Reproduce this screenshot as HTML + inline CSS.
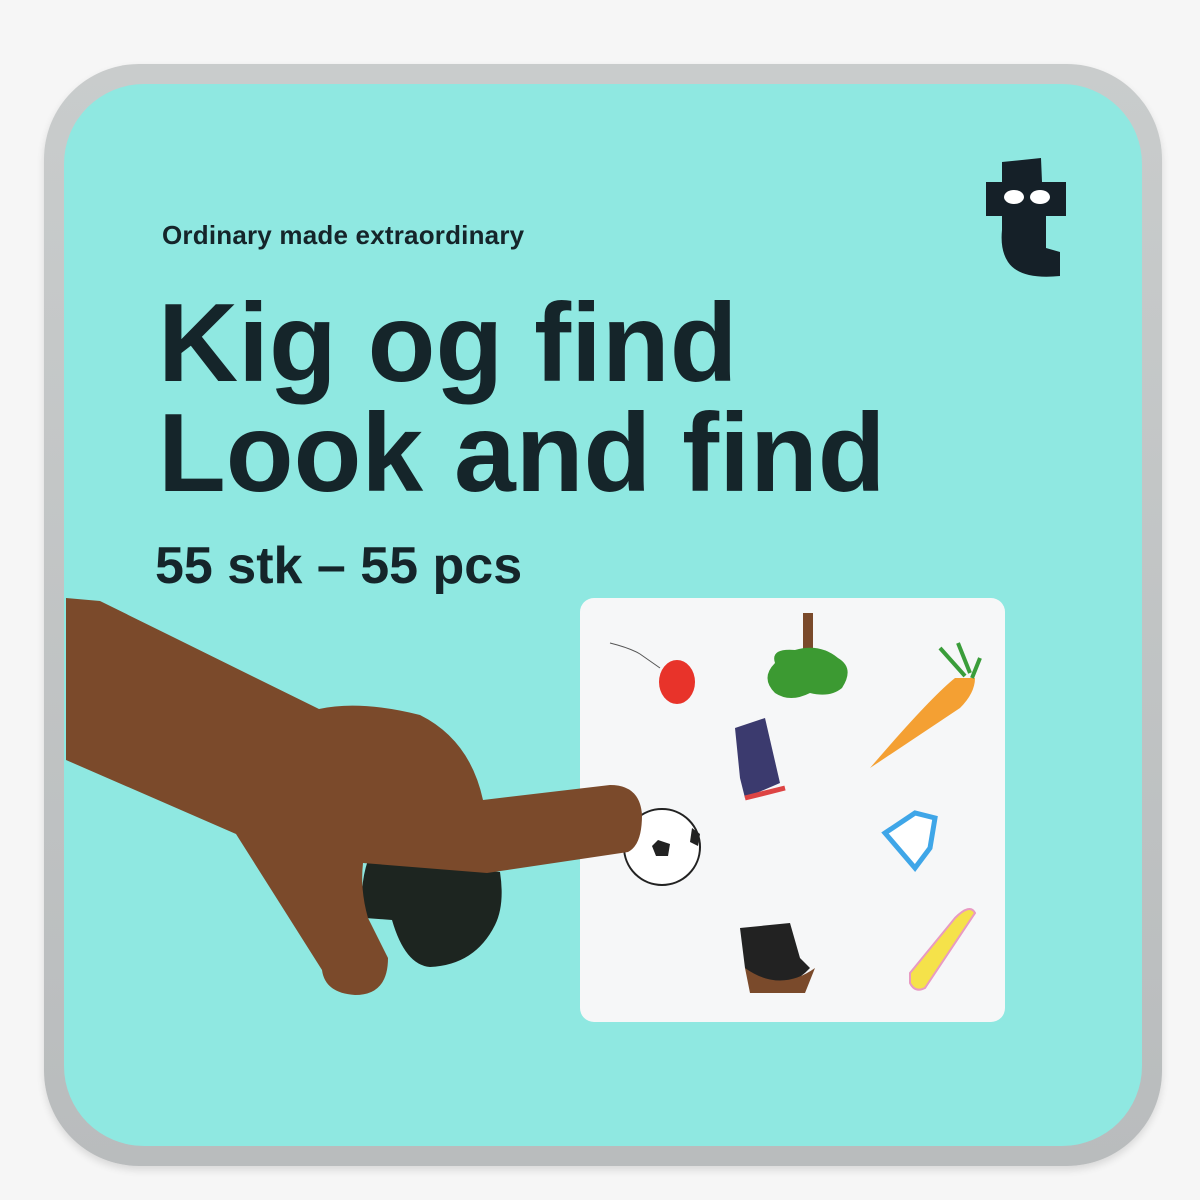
<!DOCTYPE html>
<html><head><meta charset="utf-8"><style>
body{margin:0;width:1200px;height:1200px;background:#f6f6f6;position:relative;overflow:hidden;font-family:"Liberation Sans",sans-serif}
.tin{position:absolute;left:44px;top:64px;width:1118px;height:1102px;border-radius:95px;background:linear-gradient(#c9cccc,#b9bcbd);box-shadow:0 4px 8px rgba(0,0,0,.12)}
.panel{position:absolute;left:64px;top:84px;width:1078px;height:1062px;border-radius:80px;background:#8fe8e1;overflow:hidden}
.t{position:absolute;color:#15252a;font-weight:bold;white-space:nowrap}
.card{position:absolute;left:580px;top:598px;width:425px;height:424px;background:#f6f7f8;border-radius:14px}
</style></head><body>
<div class="tin"></div>
<div class="panel"></div>
<div class="t" style="left:162px;top:220px;font-size:26px;letter-spacing:0.2px">Ordinary made extraordinary</div>
<div class="t" style="left:158px;top:288px;font-size:111px;letter-spacing:0;line-height:110px">Kig og find<br>Look and find</div>
<div class="t" style="left:155px;top:536px;font-size:52px;letter-spacing:0">55 stk – 55 pcs</div>
<svg style="position:absolute;left:0;top:0" width="1200" height="1200">
<path d="M1002 162 L1041 158 L1042 182 L1066 182 L1066 216 L1046 216 L1046 248 L1060 252 L1060 276 Q1020 280 1008 262 Q1000 250 1002 230 L1002 216 L986 216 L986 182 L1002 182 Z" fill="#152028"/>
<ellipse cx="1014" cy="197" rx="10" ry="7" fill="#fff"/><ellipse cx="1040" cy="197" rx="10" ry="7" fill="#fff"/>
</svg>
<div class="card"></div>
<svg style="position:absolute;left:580px;top:598px" width="425" height="424">
<ellipse cx="97" cy="84" rx="18" ry="22" fill="#e8332a"/><path d="M30 45 Q50 50 60 56 L80 70" stroke="#555" fill="none"/>
<rect x="223" y="15" width="10" height="55" fill="#7a4a2b"/><path d="M195 65 Q190 50 215 52 Q240 45 258 60 Q275 70 262 90 Q250 100 230 95 Q210 105 195 95 Q180 80 195 65Z" fill="#3c9a32"/>
<path d="M290 170 Q350 100 375 80 L395 80 Q395 95 380 110 Z" fill="#f4a033"/><path d="M360 50 L385 78 M378 45 L390 75 M400 60 L392 80" stroke="#3a9d3a" stroke-width="4"/>
<path d="M155 130 L185 120 L200 185 L165 200 L160 180 Z" fill="#3b3a6e"/><path d="M165 200 L205 190" stroke="#d44" stroke-width="5"/>
<path d="M305 235 L335 215 L355 220 L350 250 L335 270 Z" fill="#fff" stroke="#3fa6e8" stroke-width="5"/>
<circle cx="82" cy="249" r="38" fill="#fff" stroke="#222" stroke-width="2"/><path d="M78 242 L90 246 L88 258 L76 258 L72 248Z" fill="#222"/><path d="M112 230 L120 236 L118 248 L110 244Z" fill="#222"/>
<path d="M160 330 L210 325 L220 360 L230 370 Q210 392 175 390 L165 370 Z" fill="#222"/><path d="M165 370 Q200 395 235 370 L225 395 L170 395Z" fill="#7a4a2b"/>
<path d="M330 375 L375 320 Q390 305 395 315 L345 390 Q335 395 330 385Z" fill="#f5e24a" stroke="#e89ac3" stroke-width="2"/>
</svg>
<svg style="position:absolute;left:0;top:0" width="1200" height="1200">
<path d="M368 860 L500 872 Q505 905 495 925 Q475 965 430 967 Q405 965 392 920 L365 918 Q358 890 368 860 Z" fill="#1d2520"/>
<path d="M66 598 L100 601 L319 709 Q360 700 420 715 Q470 740 483 800 L610 785 Q640 785 642 815 Q642 845 628 852 L487 873 L363 863 Q360 890 368 918 L388 958 Q388 995 355 995 Q325 993 322 970 L236 834 L66 760 Z" fill="#7b4a2b"/>
</svg>
</body></html>
